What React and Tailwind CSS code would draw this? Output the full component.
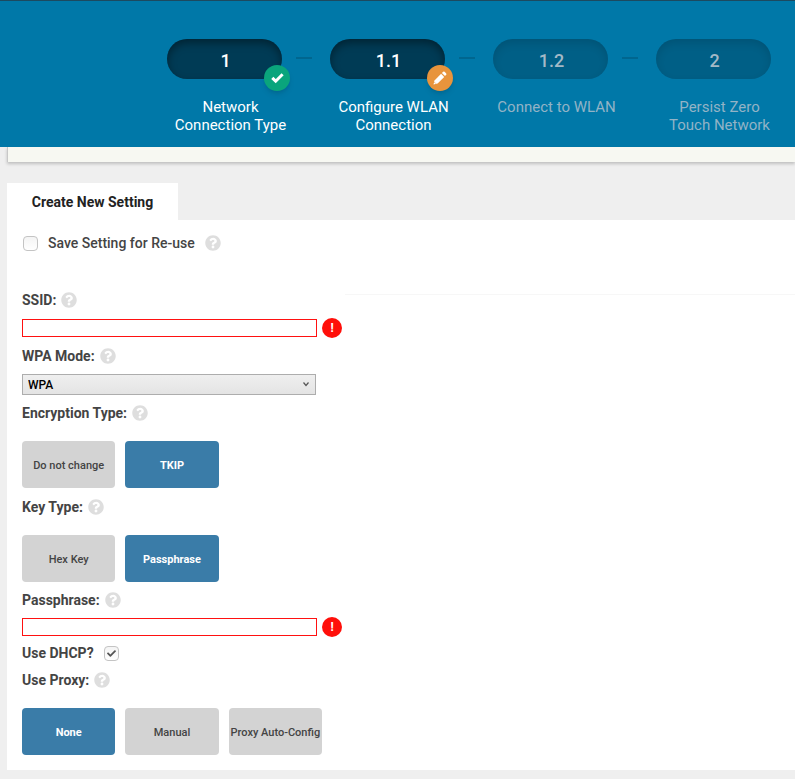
import { FaCheck, FaQuestionCircle } from "react-icons/fa";

const steps = [
  { number: "1", label: "Network Connection Type", state: "done" },
  { number: "1.1", label: "Configure WLAN Connection", state: "current" },
  { number: "1.2", label: "Connect to WLAN", state: "pending" },
  { number: "2", label: "Persist Zero Touch Network", state: "pending" },
];

function Step({ number, label, state }) {
  const active = state !== "pending";
  return (
    <li className="flex w-[127px] shrink-0 flex-col">
      <div
        className={
          active
            ? "relative flex h-10 w-[115px] items-center justify-center rounded-full bg-[#003b55] pl-0.5 text-lg font-medium text-white shadow-[inset_0_4px_8px_rgba(0,0,0,0.4)]"
            : "relative flex h-10 w-[115px] items-center justify-center rounded-full bg-[#005f86] pl-0.5 text-lg font-medium text-[#a3b9c6] shadow-[inset_0_4px_8px_rgba(0,0,0,0.12)]"
        }
      >
        <span className="pt-1">{number}</span>
        {state === "done" && (
          <span className="absolute -right-2 -bottom-3 flex size-[26px] items-center justify-center rounded-full bg-[#0aa57c] text-white shadow-md">
            <svg viewBox="0 0 13 11" className="h-[11px] w-[13px] fill-none stroke-current stroke-3">
              <path d="M1.3 4.9 L4.7 8.2 L11.6 1.3" />
            </svg>
          </span>
        )}
        {state === "current" && (
          <span className="absolute -right-2 -bottom-3 flex size-[26px] items-center justify-center rounded-full bg-[#e8943c] text-white shadow-md">
            <svg viewBox="0 0 14 14" className="size-3.5 fill-current">
              <path d="M0.5 13.5 L1.5 9.4 L8.1 2.8 L11.2 5.9 L4.6 12.5 Z" />
              <path d="M8.9 2 L10.2 0.8 Q10.9 0.2 11.6 0.8 L13.2 2.4 Q13.8 3.1 13.2 3.8 L12 5.1 Z" />
              <path d="M1.6 11.4 L2.6 12.4" className="stroke-[#e8943c]" />
            </svg>
          </span>
        )}
      </div>
      <p
        className={
          active
            ? "mt-[19px] px-1 text-center text-[15px] leading-[18px] text-white"
            : "mt-[19px] px-1 text-center text-[15px] leading-[18px] text-[#92b3c6]"
        }
      >
        {label}
      </p>
    </li>
  );
}

function Connector() {
  return (
    <li aria-hidden="true" className="flex w-9 shrink-0 px-0.5 pt-[18px]">
      <span className="h-0.5 w-4 bg-[#00668f]" />
    </li>
  );
}

function Help() {
  return <FaQuestionCircle className="size-4 shrink-0 text-[#dedede]" />;
}

function FieldLabel({ htmlFor, id, children }) {
  return (
    <div className="flex h-[18px] items-center gap-[5px]">
      {htmlFor ? <label htmlFor={htmlFor}>{children}</label> : <span id={id}>{children}</span>}
      <Help />
    </div>
  );
}

function Checkbox({ id, checked }) {
  return (
    <span className="relative flex size-[15px]">
      <input
        id={id}
        type="checkbox"
        defaultChecked={checked}
        className="peer size-[15px] appearance-none rounded-[4px] border border-[#c4c4c4] bg-linear-to-b from-[#f4f4f4] to-white"
      />
      <FaCheck className="pointer-events-none absolute top-[3px] left-[3px] hidden size-[9px] text-[#555] peer-checked:block" />
    </span>
  );
}

function RequiredInput({ id, type }) {
  return (
    <div className="flex h-[18px] items-center gap-[5px]">
      <input
        id={id}
        type={type}
        className="h-[18px] w-[295px] border border-[#f11] bg-white px-1 text-xs outline-none"
      />
      <span className="flex size-5 items-center justify-center rounded-full bg-[#ff0f0a] text-xs font-bold text-white">
        !
      </span>
    </div>
  );
}

function ButtonGroup({ labelledBy, options, selected }) {
  return (
    <div role="group" aria-labelledby={labelledBy} className="mt-[19px] grid w-[300px] grid-cols-3 gap-2.5">
      {options.map((option) => (
        <button
          key={option}
          type="button"
          aria-pressed={option === selected}
          className={
            option === selected
              ? "h-[47px] rounded bg-[#3a7ca8] pt-0.5 text-[11px] font-bold whitespace-nowrap text-white"
              : "h-[47px] rounded bg-[#d3d3d3] pt-0.5 text-[11px] font-medium whitespace-nowrap text-[#444]"
          }
        >
          {option}
        </button>
      ))}
    </div>
  );
}

export default function App() {
  return (
    <div className="min-h-screen bg-[#efefef] pb-2 font-[Roboto,sans-serif] text-[#444]">
      <header className="border-t border-[#1c4a60] bg-[#0078a8] pt-[38px] pb-[13px]">
        <ol className="flex pl-[167px]">
          {steps.flatMap((step, index) => [
            index > 0 && <Connector key={"line-" + step.number} />,
            <Step key={step.number} {...step} />,
          ])}
        </ol>
      </header>

      <main className="pl-[7px]">
        <div className="h-[15px] border-l border-[#c8c8c8] bg-[#f7f8f2] shadow-[0_2px_3px_rgba(0,0,0,0.2)]" />

        <h2 className="mt-[21px] flex h-[37px] w-[171px] items-center justify-center bg-white text-sm font-bold text-[#222]">
          Create New Setting
        </h2>

        <form className="bg-white pt-3.5 pb-[15px] pl-[15px] text-sm font-bold">
          <div className="flex h-[18px] items-center pl-px">
            <Checkbox id="save" />
            <label htmlFor="save" className="mx-2.5 font-medium">
              Save Setting for Re-use
            </label>
            <Help />
          </div>

          <hr className="mt-[42px] mb-[-4px] ml-[323px] border-[#f7f7f7]" />

          <FieldLabel htmlFor="ssid">SSID:</FieldLabel>
          <div className="mt-2.5">
            <RequiredInput id="ssid" type="text" />
          </div>

          <div className="mt-2.5">
            <FieldLabel htmlFor="mode">WPA Mode:</FieldLabel>
          </div>
          <div className="relative mt-[9px] w-[294px]">
            <select
              id="mode"
              className="block h-[21px] w-full appearance-none border border-[#adadad] bg-linear-to-b from-[#efefef] to-[#e4e4e4] px-[5px] text-xs font-medium text-black"
            >
              <option>WPA</option>
            </select>
            <svg
              viewBox="0 0 6 5"
              className="pointer-events-none absolute top-2 right-[7px] h-[5px] w-1.5 fill-none stroke-[#555]"
            >
              <path d="M0.5 0.5 L3 3.5 L5.5 0.5" strokeWidth="1.2" />
            </svg>
          </div>

          <div className="mt-[9px]">
            <FieldLabel id="encryption">Encryption Type:</FieldLabel>
            <ButtonGroup labelledBy="encryption" options={["Do not change", "TKIP"]} selected="TKIP" />
          </div>

          <div className="mt-2.5">
            <FieldLabel id="key-type">Key Type:</FieldLabel>
            <ButtonGroup labelledBy="key-type" options={["Hex Key", "Passphrase"]} selected="Passphrase" />
          </div>

          <div className="mt-[9px]">
            <FieldLabel htmlFor="passphrase">Passphrase:</FieldLabel>
            <div className="mt-[9px]">
              <RequiredInput id="passphrase" type="password" />
            </div>
          </div>

          <div className="mt-2 flex h-[18px] items-center gap-2.5">
            <label htmlFor="dhcp">Use DHCP?</label>
            <Checkbox id="dhcp" checked />
          </div>

          <div className="mt-[9px]">
            <FieldLabel id="proxy">Use Proxy:</FieldLabel>
            <ButtonGroup labelledBy="proxy" options={["None", "Manual", "Proxy Auto-Config"]} selected="None" />
          </div>
        </form>
      </main>
    </div>
  );
}
